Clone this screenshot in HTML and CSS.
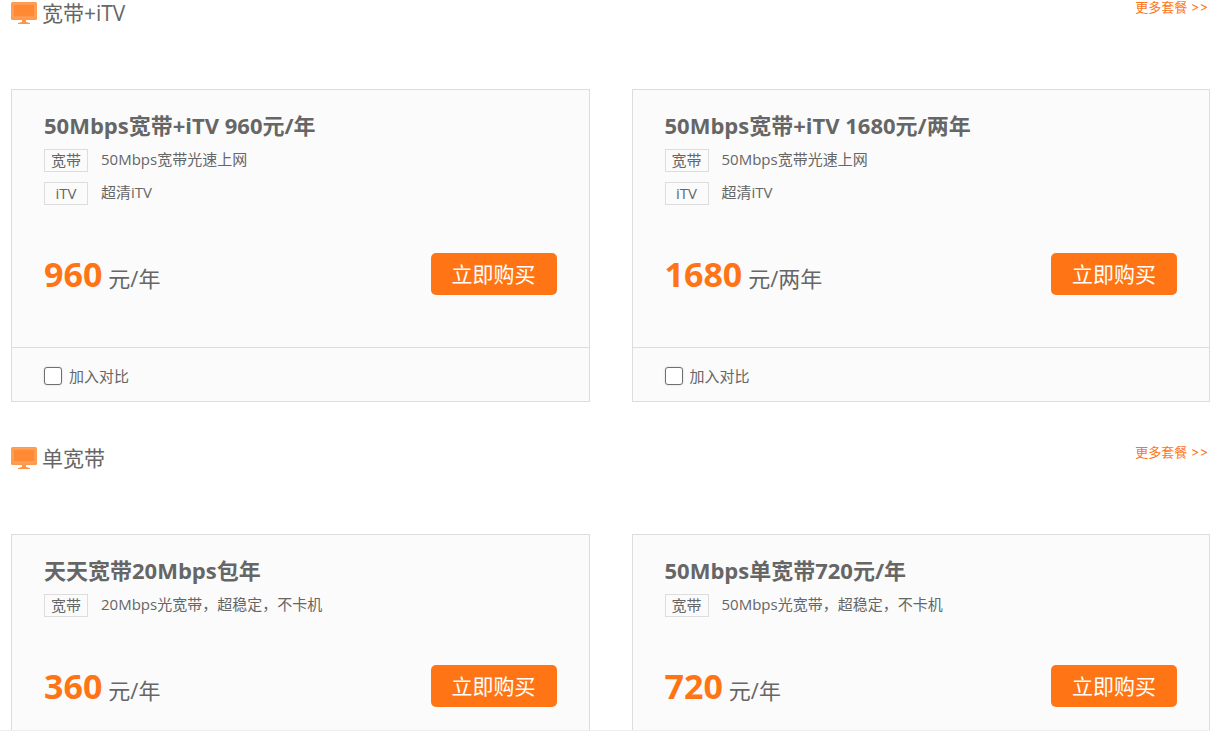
FILE: index.html
```
<!DOCTYPE html>
<html lang="zh-CN">
<head>
    <meta charset="UTF-8">
    <title>宽带套餐</title>
    <link rel="stylesheet" href="styles.css">
</head>
<body>
<svg class="defs" width="0" height="0">
    <symbol id="tv" viewBox="0 0 26 22">
        <rect x="0" y="0" width="26" height="18" rx="1.5" fill="#ff9a4d"/>
        <rect x="2" y="2" width="22" height="13" rx="1" fill="#ff8a33" stroke="#ffa768" stroke-width="1"/>
        <path d="M11 18h4v2l4 1v1H7v-1l4-1z" fill="#ff9343"/>
    </symbol>
</svg>
<div class="page">
    <div class="section">
        <div class="head">
            <h2><svg class="icon" width="26" height="22"><use href="#tv"/></svg>宽带+iTV</h2>
            <a class="more" href="#">更多套餐 &gt;&gt;</a>
        </div>
        <ul class="list">
            <li class="card">
                <div class="info">
                    <h3>50Mbps宽带+iTV 960元/年</h3>
                    <p class="item"><span class="tag">宽带</span>50Mbps宽带光速上网</p>
                    <p class="item"><span class="tag">iTV</span>超清iTV</p>
                    <div class="buy">
                        <p class="price"><b>960</b>元/年</p>
                        <button type="button" class="btn">立即购买</button>
                    </div>
                </div>
                <label class="compare"><input type="checkbox">加入对比</label>
            </li>
            <li class="card">
                <div class="info">
                    <h3>50Mbps宽带+iTV 1680元/两年</h3>
                    <p class="item"><span class="tag">宽带</span>50Mbps宽带光速上网</p>
                    <p class="item"><span class="tag">iTV</span>超清iTV</p>
                    <div class="buy">
                        <p class="price"><b>1680</b>元/两年</p>
                        <button type="button" class="btn">立即购买</button>
                    </div>
                </div>
                <label class="compare"><input type="checkbox">加入对比</label>
            </li>
        </ul>
    </div>
    <div class="section last">
        <div class="head">
            <h2><svg class="icon" width="26" height="22"><use href="#tv"/></svg>单宽带</h2>
            <a class="more" href="#">更多套餐 &gt;&gt;</a>
        </div>
        <ul class="list">
            <li class="card">
                <div class="info">
                    <h3>天天宽带20Mbps包年</h3>
                    <p class="item"><span class="tag">宽带</span>20Mbps光宽带，超稳定，不卡机</p>
                    <div class="buy">
                        <p class="price"><b>360</b>元/年</p>
                        <button type="button" class="btn">立即购买</button>
                    </div>
                </div>
            </li>
            <li class="card">
                <div class="info">
                    <h3>50Mbps单宽带720元/年</h3>
                    <p class="item"><span class="tag">宽带</span>50Mbps光宽带，超稳定，不卡机</p>
                    <div class="buy">
                        <p class="price"><b>720</b>元/年</p>
                        <button type="button" class="btn">立即购买</button>
                    </div>
                </div>
            </li>
        </ul>
    </div>
</div>
</body>
</html>
```

FILE: styles.css
```
*{padding:0;margin:0;box-sizing:border-box;}
body{background:#fff;color:#666;font-size:15px;font-family:"Open Sans","Noto Sans CJK SC",sans-serif;}
ul{list-style:none;}
a{text-decoration:none;}
.defs{display:block;}
.page{border-bottom:1px solid #eee;}
.section{padding-left:11px;margin-bottom:43px;}
.section.last{margin-bottom:0;}

/*标题栏*/
.head{display:flex;justify-content:space-between;align-items:flex-start;height:89px;}
.head h2{display:flex;align-items:center;gap:5px;font-size:21px;font-weight:normal;line-height:26px;}
.more{padding-right:2px;color:#ff7516;font-size:13px;font-family:Inter,"Noto Sans CJK SC",sans-serif;line-height:14px;}

/*套餐*/
.list{display:grid;grid-template-columns:1fr 1fr;gap:42px;}
.card{background:#fbfbfb;border:1px solid #ddd;}
.info{padding:19px 32px 52px;}
.card h3{font-size:22px;line-height:32px;margin-bottom:8px;}
.item{display:flex;gap:13px;line-height:21px;margin-bottom:10px;}
.tag{width:44px;height:23px;border:1px solid #ddd;text-align:center;}
.buy{display:flex;justify-content:space-between;align-items:center;margin-top:48px;}
.price{display:flex;align-items:baseline;gap:6px;height:42px;font-size:22px;line-height:42px;}
.price b{color:#ff7516;font-size:34px;}
.btn{width:126px;height:42px;border:0;border-radius:5px;background:#ff7516;color:#fff;font-size:21px;font-family:inherit;line-height:42px;cursor:pointer;}
.compare{display:flex;align-items:center;gap:7px;height:54px;padding:2px 32px 0;border-top:1px solid #ddd;}
.compare input{appearance:none;width:18px;height:18px;border:1px solid #707070;border-radius:3px;background:#fff;box-shadow:0 0 2px #ccc;}
.compare input:checked{background:#ff7516;}
.last .card{border-bottom:0;}
.last .info{padding-bottom:23px;}
```
